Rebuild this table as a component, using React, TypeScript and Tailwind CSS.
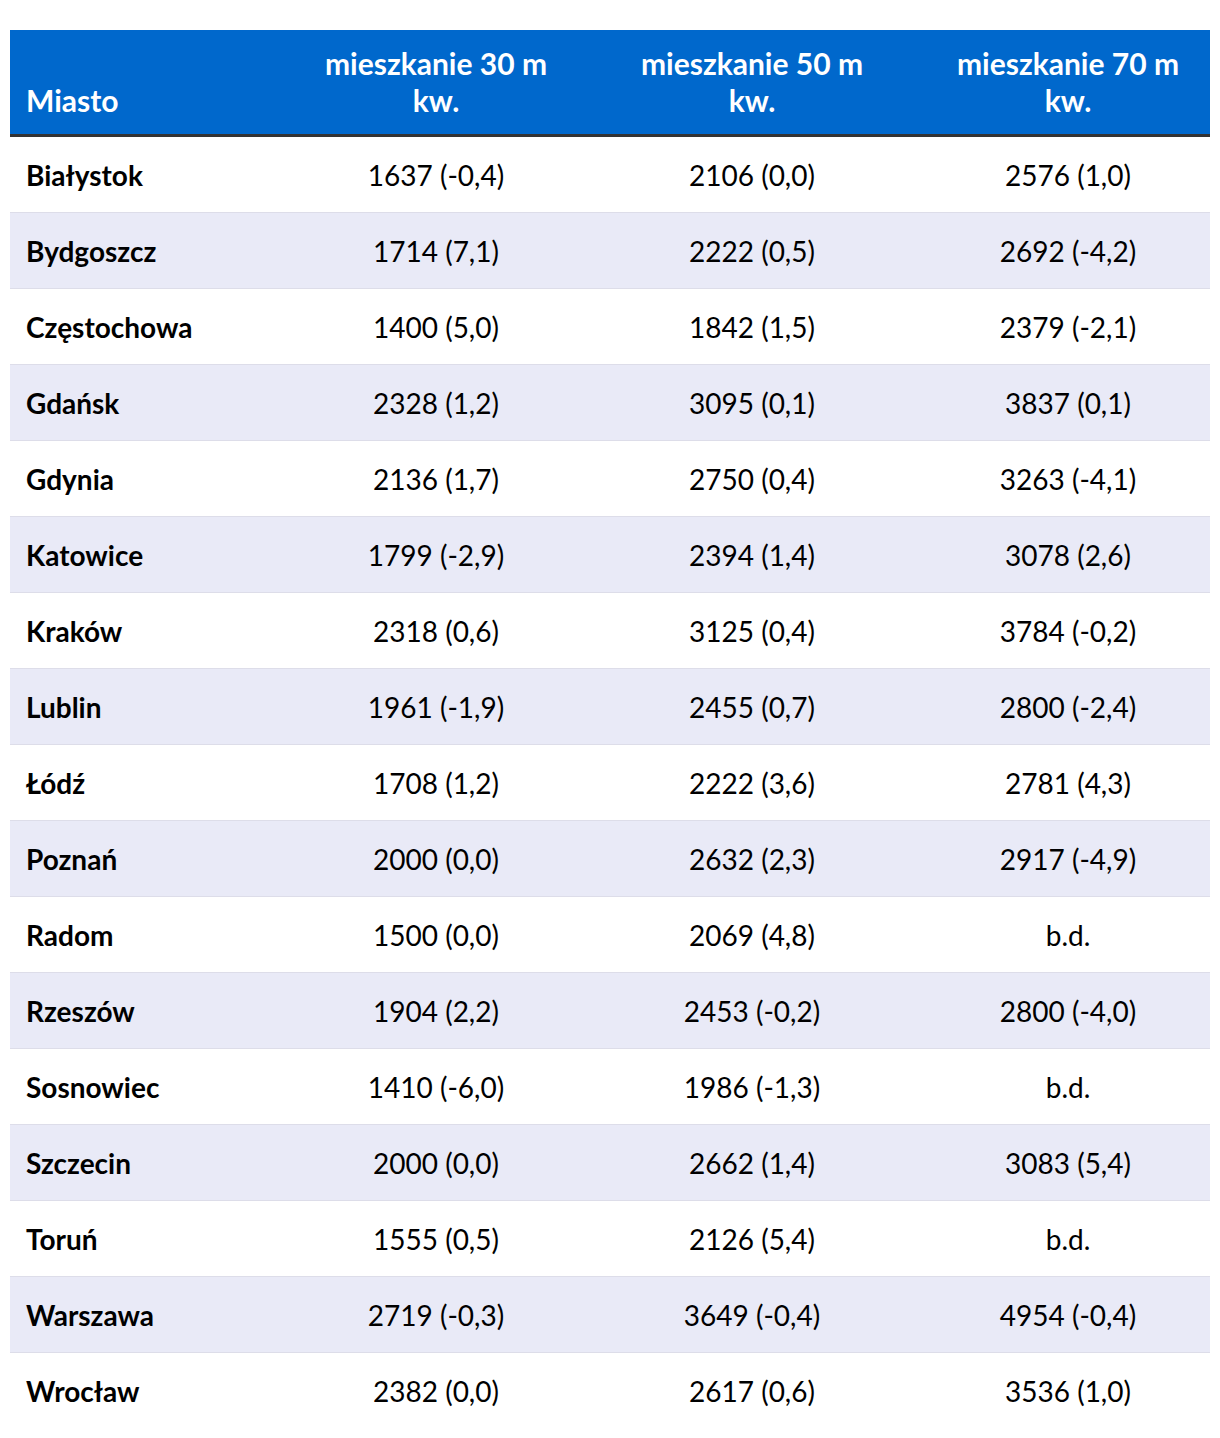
import React from "react";

const rows: [string, string, string, string][] = [
  ["Białystok", "1637 (-0,4)", "2106 (0,0)", "2576 (1,0)"],
  ["Bydgoszcz", "1714 (7,1)", "2222 (0,5)", "2692 (-4,2)"],
  ["Częstochowa", "1400 (5,0)", "1842 (1,5)", "2379 (-2,1)"],
  ["Gdańsk", "2328 (1,2)", "3095 (0,1)", "3837 (0,1)"],
  ["Gdynia", "2136 (1,7)", "2750 (0,4)", "3263 (-4,1)"],
  ["Katowice", "1799 (-2,9)", "2394 (1,4)", "3078 (2,6)"],
  ["Kraków", "2318 (0,6)", "3125 (0,4)", "3784 (-0,2)"],
  ["Lublin", "1961 (-1,9)", "2455 (0,7)", "2800 (-2,4)"],
  ["Łódź", "1708 (1,2)", "2222 (3,6)", "2781 (4,3)"],
  ["Poznań", "2000 (0,0)", "2632 (2,3)", "2917 (-4,9)"],
  ["Radom", "1500 (0,0)", "2069 (4,8)", "b.d."],
  ["Rzeszów", "1904 (2,2)", "2453 (-0,2)", "2800 (-4,0)"],
  ["Sosnowiec", "1410 (-6,0)", "1986 (-1,3)", "b.d."],
  ["Szczecin", "2000 (0,0)", "2662 (1,4)", "3083 (5,4)"],
  ["Toruń", "1555 (0,5)", "2126 (5,4)", "b.d."],
  ["Warszawa", "2719 (-0,3)", "3649 (-0,4)", "4954 (-0,4)"],
  ["Wrocław", "2382 (0,0)", "2617 (0,6)", "3536 (1,0)"],
];

export default function App() {
  return (
    <div
      className="bg-white min-h-[1438px] pt-[30px] px-[10px]"
      style={{ fontFamily: "Lato, 'Noto Sans', sans-serif" }}
    >
      <div className="w-[1200px]">
        <div className="grid grid-cols-[252px_316px_316px_316px] h-[107px] bg-[#0068cc] text-white font-bold text-[30px] leading-[37px] border-b-[3px] border-[#333333]">
          <div className="flex items-end pl-[16px] pb-[15px]">Miasto</div>
          {["30", "50", "70"].map((n) => (
            <div key={n} className="flex items-end justify-center text-center pl-[48px] pr-[16px] pb-[15px]">
              <span>
                mieszkanie {n} m
                <br />
                kw.
              </span>
            </div>
          ))}
        </div>
        {rows.map((r, i) => (
          <div
            key={r[0]}
            className={
              "grid grid-cols-[252px_316px_316px_316px] h-[76px] text-[28px] text-black " +
              (i < rows.length - 1 ? "border-b border-[#dddde9] " : "") +
              (i % 2 === 1 ? "bg-[#e9eaf7]" : "bg-white")
            }
          >
            <div className="flex items-center pl-[16px] font-bold">{r[0]}</div>
            {r.slice(1).map((v, j) => (
              <div key={j} className="flex items-center justify-center pl-[48px] pr-[16px]">
                {v}
              </div>
            ))}
          </div>
        ))}
      </div>
    </div>
  );
}
